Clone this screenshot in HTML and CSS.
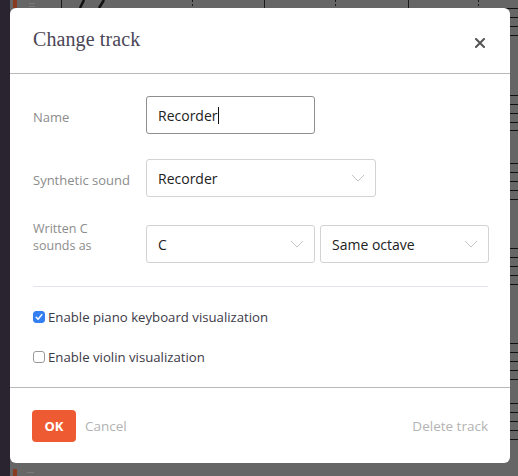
FILE: index.html
```html
<!DOCTYPE html>
<html>
<head>
<meta charset="utf-8">
<link rel="stylesheet" href="styles.css">
</head>
<body>
<div class="backdrop">
  <svg class="score" width="518" height="476" viewBox="0 0 518 476">
    <rect x="0" y="0" width="10" height="476" fill="#29242f"/>
    <rect x="13" y="0" width="4" height="8" fill="#8a3a1e"/>
    <rect x="13" y="469" width="4" height="7" fill="#8a3a1e"/>
    <g stroke="#7a7a7a" stroke-width="1">
      <line x1="29" y1="3.5" x2="35" y2="3.5"/>
      <line x1="29" y1="6.5" x2="35" y2="6.5"/>
      <line x1="27" y1="472.5" x2="34" y2="472.5"/>
    </g>
    <g stroke="#1a1a1a" stroke-width="1">
      <line x1="61.5" y1="0" x2="61.5" y2="8"/>
      <line x1="264.5" y1="0" x2="264.5" y2="8"/>
      <line x1="408.5" y1="0" x2="408.5" y2="8"/>
      <line x1="192.5" y1="0" x2="192.5" y2="8" stroke-dasharray="2 2"/>
      <line x1="335.5" y1="0" x2="335.5" y2="8" stroke-dasharray="2 2"/>
      <line x1="478.5" y1="0" x2="478.5" y2="8" stroke-dasharray="2 2"/>
    </g>
    <g stroke="#111" stroke-width="2.5">
      <line x1="80" y1="8" x2="84" y2="0"/>
      <line x1="99" y1="8" x2="104" y2="0"/>
    </g>
    <g stroke="#111" stroke-width="1">
      <line x1="505" y1="8.5" x2="518" y2="8.5"/>
      <line x1="500" y1="17.5" x2="518" y2="17.5"/>
      <line x1="500" y1="26.5" x2="518" y2="26.5"/>
      <line x1="500" y1="35.5" x2="518" y2="35.5"/>
      <line x1="500" y1="95.5" x2="518" y2="95.5"/>
      <line x1="500" y1="104.5" x2="518" y2="104.5"/>
      <line x1="500" y1="113.5" x2="518" y2="113.5"/>
      <line x1="500" y1="122.5" x2="518" y2="122.5"/>
      <line x1="500" y1="130.5" x2="518" y2="130.5"/>
      <line x1="500" y1="163.5" x2="518" y2="163.5"/>
      <line x1="500" y1="172.5" x2="518" y2="172.5"/>
      <line x1="500" y1="181.5" x2="518" y2="181.5"/>
      <line x1="500" y1="190.5" x2="518" y2="190.5"/>
      <line x1="500" y1="199.5" x2="518" y2="199.5"/>
      <line x1="500" y1="248.5" x2="518" y2="248.5"/>
      <line x1="500" y1="257.5" x2="518" y2="257.5"/>
      <line x1="500" y1="266.5" x2="518" y2="266.5"/>
      <line x1="500" y1="275.5" x2="518" y2="275.5"/>
      <line x1="500" y1="284.5" x2="518" y2="284.5"/>
      <line x1="500" y1="343.5" x2="518" y2="343.5"/>
      <line x1="500" y1="352.5" x2="518" y2="352.5"/>
      <line x1="500" y1="361.5" x2="518" y2="361.5"/>
      <line x1="500" y1="370.5" x2="518" y2="370.5"/>
      <line x1="500" y1="379.5" x2="518" y2="379.5"/>
      <line x1="500" y1="403.5" x2="518" y2="403.5"/>
      <line x1="500" y1="412.5" x2="518" y2="412.5"/>
      <line x1="500" y1="421.5" x2="518" y2="421.5"/>
      <line x1="500" y1="430.5" x2="518" y2="430.5"/>
      <line x1="500" y1="439.5" x2="518" y2="439.5"/>
    </g>
  </svg>
</div>

<div class="modal">
  <div class="modal-header">
    <h2 class="modal-title">Change track</h2>
    <button class="close" aria-label="Close">
      <svg width="10" height="10" viewBox="0 0 10 10"><path d="M1 1 L9 9 M9 1 L1 9" stroke="#555" stroke-width="2" stroke-linecap="square"/></svg>
    </button>
  </div>

  <div class="modal-body">
    <div class="row row-name">
      <label class="label">Name</label>
      <div class="input focused"><span>Recorder</span><span class="caret"></span></div>
    </div>
    <div class="row row-sound">
      <label class="label">Synthetic sound</label>
      <div class="select wide"><span>Recorder</span><svg class="chev" width="14" height="8" viewBox="0 0 14 8"><path d="M1 1 L7 7 L13 1" fill="none" stroke="#c4c4c4" stroke-width="1"/></svg></div>
    </div>
    <div class="row row-written">
      <label class="label two-line"><span class="ln">Written C</span><span class="ln">sounds as</span></label>
      <div class="select-pair">
        <div class="select"><span>C</span><svg class="chev" width="14" height="8" viewBox="0 0 14 8"><path d="M1 1 L7 7 L13 1" fill="none" stroke="#c4c4c4" stroke-width="1"/></svg></div>
        <div class="select"><span>Same octave</span><svg class="chev" width="14" height="8" viewBox="0 0 14 8"><path d="M1 1 L7 7 L13 1" fill="none" stroke="#c4c4c4" stroke-width="1"/></svg></div>
      </div>
    </div>
    <div class="divider"></div>
    <div class="check-row first">
      <span class="box checked"><svg width="12" height="12" viewBox="0 0 12 12"><path d="M3.2 6.2 L5.1 8.2 L8.8 3.6" fill="none" stroke="#fff" stroke-width="1.5" stroke-linecap="round" stroke-linejoin="round"/></svg></span>
      <span class="check-text">Enable piano keyboard visualization</span>
    </div>
    <div class="check-row">
      <span class="box"></span>
      <span class="check-text">Enable violin visualization</span>
    </div>
  </div>

  <div class="modal-footer">
    <div class="footer-left">
      <button class="btn-ok">OK</button>
      <button class="btn-link">Cancel</button>
    </div>
    <button class="btn-link">Delete track</button>
  </div>
</div>
</body>
</html>
```

FILE: styles.css
```css
* { box-sizing: border-box; }

html, body {
  margin: 0;
  padding: 0;
}

body {
  width: 518px;
  height: 476px;
  overflow: hidden;
  background: #666666;
  font-family: "Open Sans", "Lato", sans-serif;
  position: relative;
}

.backdrop {
  position: absolute;
  inset: 0;
}

.score { display: block; }

.modal {
  position: absolute;
  left: 10px;
  top: 8px;
  width: 500px;
  height: 455px;
  background: #ffffff;
  border-radius: 6px;
  display: flex;
  flex-direction: column;
}

.modal-header {
  height: 66px;
  border-bottom: 1px solid #b8b8b8;
  display: flex;
  align-items: center;
  justify-content: space-between;
  padding: 0 25px 0 23px;
}

.modal-title {
  margin: 0;
  font-family: "Liberation Serif", "Times New Roman", serif;
  font-weight: normal;
  font-size: 20px;
  color: #4a4656;
  letter-spacing: 0.1px;
  position: relative;
  top: -1px;
}

.close {
  border: 0;
  background: none;
  padding: 0;
  width: 10px;
  height: 10px;
  display: flex;
  position: relative;
  top: 2px;
}

.modal-body {
  padding: 22px 22px 20px 23px;
  border-bottom: 1px solid #b8b8b8;
}

.row {
  display: flex;
  align-items: center;
  height: 38px;
}

.row-sound { margin-top: 25px; }
.row-written { margin-top: 28px; align-items: flex-start; }

.label {
  width: 113px;
  flex: none;
  font-size: 13px;
  color: #8c8c8c;
  line-height: 16px;
  position: relative;
  top: 2px;
}

.two-line {
  top: -5px;
  display: flex;
  flex-direction: column;
  font-size: 12.5px;
}

.ln {
  display: block;
  height: 17px;
  line-height: 17px;
}

.input, .select {
  height: 38px;
  border: 1px solid #d3d3d3;
  border-radius: 3px;
  display: flex;
  align-items: center;
  padding: 0 10px 0 11px;
  font-size: 14px;
  color: #222222;
}

.input {
  width: 169px;
  border-color: #8e8e8e;
}

.caret {
  display: inline-block;
  width: 1px;
  height: 17px;
  background: #111;
}

.select {
  justify-content: space-between;
  width: 169px;
}

.select.wide { width: 230px; }

.select-pair {
  display: flex;
  gap: 5px;
}

.chev { flex: none; }

.divider {
  margin-top: 23px;
  height: 1px;
  background: #e4e4ea;
}

.check-row {
  display: flex;
  align-items: center;
  height: 20px;
  margin-top: 20px;
}

.box {
  width: 12px;
  height: 12px;
  border: 1px solid #9a9a9a;
  border-radius: 3px;
  background: #fff;
  flex: none;
  margin-right: 3px;
  display: flex;
}

.box.checked {
  background: #3480f2;
  border-color: #3480f2;
}

.box svg { margin: -1px; }

.check-text {
  font-size: 13.2px;
  color: #3d3a47;
}

.modal-footer {
  padding: 22px 22px 20px 22px;
  display: flex;
  justify-content: space-between;
  align-items: center;
}

.footer-left {
  display: flex;
  align-items: center;
  gap: 9px;
}

button { font-family: inherit; cursor: pointer; }

.btn-ok {
  width: 44px;
  height: 32px;
  border: 0;
  border-radius: 4px;
  background: #ee5b33;
  color: #ffffff;
  font-weight: bold;
  font-size: 13px;
  padding: 0;
}

.btn-link {
  border: 0;
  background: none;
  padding: 0;
  font-size: 13.5px;
  color: #b3b3b3;
}
```
